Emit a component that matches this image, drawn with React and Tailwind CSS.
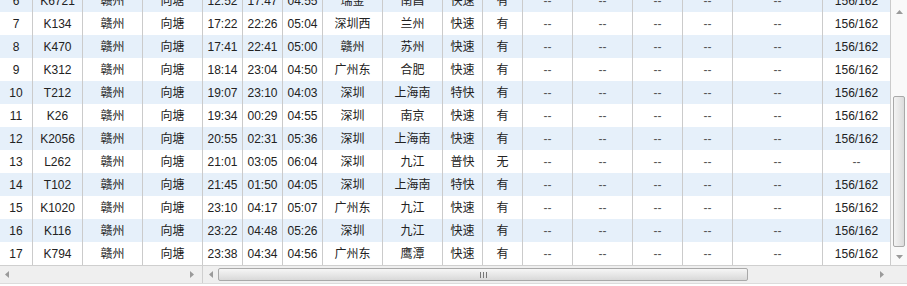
const WIDTHS = ['w-[33px]', 'w-[50px]', 'w-[60px]', 'w-[60px]', 'w-[40px]', 'w-[40px]', 'w-[40px]', 'w-[60px]', 'w-[60px]', 'w-[40px]', 'w-[40px]', 'w-[50px]', 'w-[60px]', 'w-[50px]', 'w-[50px]', 'w-[90px]', 'w-[68px]'];

const TRAINS = [
  ['6', 'K6721', '12:52', '17:47', '04:55', '瑞金', '南昌', '快速', '有', '156/162'],
  ['7', 'K134', '17:22', '22:26', '05:04', '深圳西', '兰州', '快速', '有', '156/162'],
  ['8', 'K470', '17:41', '22:41', '05:00', '赣州', '苏州', '快速', '有', '156/162'],
  ['9', 'K312', '18:14', '23:04', '04:50', '广州东', '合肥', '快速', '有', '156/162'],
  ['10', 'T212', '19:07', '23:10', '04:03', '深圳', '上海南', '特快', '有', '156/162'],
  ['11', 'K26', '19:34', '00:29', '04:55', '深圳', '南京', '快速', '有', '156/162'],
  ['12', 'K2056', '20:55', '02:31', '05:36', '深圳', '上海南', '快速', '有', '156/162'],
  ['13', 'L262', '21:01', '03:05', '06:04', '深圳', '九江', '普快', '无', '--'],
  ['14', 'T102', '21:45', '01:50', '04:05', '深圳', '上海南', '特快', '有', '156/162'],
  ['15', 'K1020', '23:10', '04:17', '05:07', '广州东', '九江', '快速', '有', '156/162'],
  ['16', 'K116', '23:22', '04:48', '05:26', '深圳', '九江', '快速', '有', '156/162'],
  ['17', 'K794', '23:38', '04:34', '04:56', '广州东', '鹰潭', '快速', '有', '156/162'],
];

function Arrow({ dir }) {
  const pts = {
    up: '0,4 3.5,0 7,4',
    down: '0,0 3.5,4 7,0',
    left: '4,0 0,3.5 4,7',
    right: '0,0 4,3.5 0,7',
  }[dir];
  const vertical = dir === 'up' || dir === 'down';
  return (
    <svg width={vertical ? 7 : 4} height={vertical ? 4 : 7} className="shrink-0">
      <polygon points={pts} fill="#9a9a9a" />
    </svg>
  );
}

function Row({ t, i }) {
  const [no, code, dep, arr, dur, fromSt, toSt, kind, seat, last] = t;
  const cells = [no, code, '赣州', '向塘', dep, arr, dur, fromSt, toSt, kind, seat, '--', '--', '--', '--', '--', last];
  return (
    <div className={`flex h-[23px] ${i % 2 === 0 ? 'bg-[#e6f0fa]' : 'bg-white'}`}>
      {cells.map((c, j) => (
        <div
          key={j}
          className={`${WIDTHS[j]} shrink-0 flex items-center justify-center border-r border-[#cbcbcb] ${c === '--' ? 'text-[#555]' : ''}`}
        >
          {c}
        </div>
      ))}
    </div>
  );
}

export default function App() {
  return (
    <div
      className="w-[907px] h-[286px] bg-white flex flex-col overflow-hidden text-[12px] text-[#222]"
      style={{ fontFamily: '"Liberation Sans", "Noto Sans CJK SC", sans-serif' }}
    >
      <div className="flex h-[265px]">
        <div className="w-[891px] overflow-hidden">
          <div className="-mt-[11px]">
            {TRAINS.map((t, i) => (
              <Row key={t[0]} t={t} i={i} />
            ))}
          </div>
        </div>
        <div className="w-[16px] bg-[#f9f9f9] flex flex-col items-center">
          <div className="h-[24px] flex items-center justify-center">
            <Arrow dir="up" />
          </div>
          <div className="flex-1 w-full px-[2px] pt-[73px] pb-[2px]">
            <div className="h-[151px] rounded-[2px] border border-[#a9a9a9] bg-gradient-to-r from-[#f3f3f3] to-[#dcdcdc]" />
          </div>
          <div className="h-[16px] flex items-start justify-center pt-[6px]">
            <Arrow dir="down" />
          </div>
        </div>
      </div>
      <div className="flex h-[18px] bg-[#efefef] border-t border-[#cfcfcf]">
        <div className="w-[203px] shrink-0 flex items-center justify-between pl-[5px] pr-[8px] border-r border-[#cfcfcf]">
          <Arrow dir="left" />
          <Arrow dir="right" />
        </div>
        <div className="w-[688px] shrink-0 flex items-center pl-[6px] pr-[7px]">
          <Arrow dir="left" />
          <div className="ml-[5px] w-[530px] h-[13px] rounded-[2px] border border-[#a9a9a9] bg-gradient-to-b from-[#f6f6f6] to-[#d9d9d9] flex items-center justify-center gap-[2px]">
            <span className="w-px h-[6px] bg-[#777]" />
            <span className="w-px h-[6px] bg-[#777]" />
            <span className="w-px h-[6px] bg-[#777]" />
          </div>
          <div className="flex-1" />
          <Arrow dir="right" />
        </div>
        <div className="flex-1" />
      </div>
      <div className="flex-1 bg-white border-t border-[#dcdcdc]" />
    </div>
  );
}
